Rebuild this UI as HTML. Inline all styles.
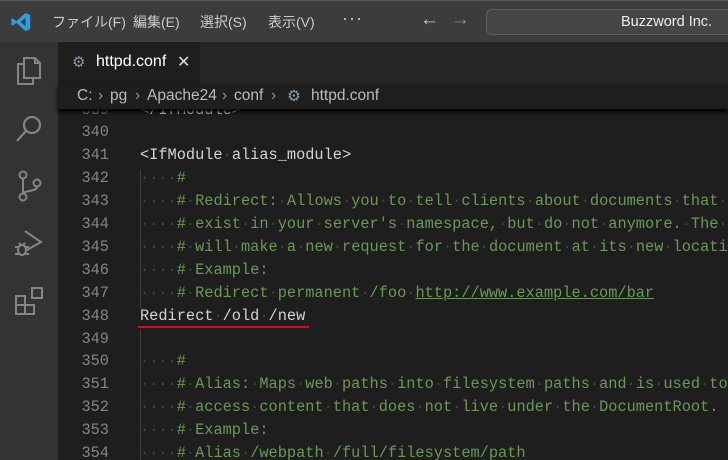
<!DOCTYPE html>
<html><head><meta charset="utf-8"><style>
*{margin:0;padding:0;box-sizing:border-box}
body{width:728px;height:460px;overflow:hidden;background:#1e1e1e;position:relative;font-family:"Liberation Sans","Noto Sans CJK JP",sans-serif}
#title{position:absolute;left:0;top:0;width:728px;height:42px;background:#3c3c3c;border-top:1px solid #555}
.menu{position:absolute;top:11px;font-size:14px;color:#ccc;white-space:nowrap}
#search{position:absolute;left:486px;top:8px;width:260px;height:26px;background:#454545;border:1px solid #5e5e5e;border-radius:6px}
#act{position:absolute;left:0;top:42px;width:58px;height:418px;background:#333}
#tabs{position:absolute;left:58px;top:42px;width:670px;height:42px;background:#252526}
#tab{position:absolute;left:0;top:0;width:142px;height:42px;background:#1e1e1e}
#crumb{position:absolute;left:58px;top:84px;width:670px;height:25px;background:#1e1e1e;box-shadow:0 3px 4px #000;z-index:3;font-size:15.5px;color:#bbb}
#crumb span{position:absolute;top:3px;white-space:nowrap}
#crumb .s{color:#999}
#ed{position:absolute;left:58px;top:84px;width:670px;height:376px;overflow:hidden}
.ln{position:absolute;left:0;width:51px;text-align:right;font:15.3px/22.9px "Liberation Mono",monospace;color:#858585}
.cd{position:absolute;left:82px;font:15.3px/22.9px "Liberation Mono",monospace;color:#d4d4d4;white-space:pre}
.c{color:#6a9955}.d{color:#454545}
.g{position:absolute;left:82px;width:1px;background:#404040}
</style></head><body>
<div id="title">
<svg style="position:absolute;left:10px;top:10px" width="22" height="22" viewBox="0 0 24 24"><path d="M17 2l5 2.5v15L17 22 7 13l-4 3-1.5-1V9L3 8l4 3 10-9zm0 5.5L11.5 12 17 16.5z" fill="#2d9fe0"/></svg>
<span class="menu" style="left:52px">ファイル(F)</span>
<span class="menu" style="left:133px">編集(E)</span>
<span class="menu" style="left:200px">選択(S)</span>
<span class="menu" style="left:268px">表示(V)</span>
<span class="menu" style="left:342px;top:7px;font-size:18px;letter-spacing:1px">···</span>
<span class="menu" style="left:420px;top:8px;font-size:19px;color:#ccc">←</span>
<span class="menu" style="left:451px;top:8px;font-size:19px;color:#888">→</span>
<div id="search"><span style="position:absolute;left:134px;top:4px;font-size:14.5px;color:#eee">Buzzword Inc.</span></div>
</div>
<div id="act">
<svg style="position:absolute;left:14px;top:13px" width="30" height="32" viewBox="0 0 30 32" fill="none" stroke="#858585" stroke-width="2"><path d="M10 3h11l5 5v15H10z M21 3v5h5"/><path d="M10 9H4v20h15v-6"/></svg>
<svg style="position:absolute;left:14px;top:72px" width="30" height="30" viewBox="0 0 30 30" fill="none" stroke="#858585" stroke-width="2.2"><circle cx="18" cy="11" r="8"/><path d="M12 17L3 27"/></svg>
<svg style="position:absolute;left:15px;top:128px" width="28" height="32" viewBox="0 0 28 32" fill="none" stroke="#858585" stroke-width="2"><circle cx="8" cy="5" r="3.5"/><circle cx="8" cy="27" r="3.5"/><circle cx="22" cy="13" r="3.5"/><path d="M8 9v14M22 17c0 5-14 3-14 7"/></svg>
<svg style="position:absolute;left:13px;top:185px" width="32" height="32" viewBox="0 0 32 32" fill="none" stroke="#858585" stroke-width="2"><path d="M12 4l16 11-14 8"/><ellipse cx="9" cy="23" rx="4" ry="5"/><path d="M2 20h4M2 27h4M12 20h4M12 27h4M6 16l2 2M12 16l-2 2"/></svg>
<svg style="position:absolute;left:14px;top:244px" width="32" height="32" viewBox="0 0 32 32" fill="none" stroke="#858585" stroke-width="2"><path d="M2 10h9v9H2zM2 19h9v9H2zM11 19h9v9h-9z"/><rect x="18" y="2" width="10" height="10"/></svg>
</div>
<div id="tabs"><div id="tab">
<span style="position:absolute;left:14px;top:11px;font-size:15px;color:#8a9aa8">⚙</span>
<span style="position:absolute;left:38px;top:11px;font-size:16px;color:#fff">httpd.conf</span>
<span style="position:absolute;left:119px;top:10px;font-size:16px;color:#ddd">✕</span>
</div></div>
<div id="crumb">
<span style="left:19px">C:</span><span class="s" style="left:40px">›</span>
<span style="left:52px">pg</span><span class="s" style="left:77px">›</span>
<span style="left:89px">Apache24</span><span class="s" style="left:164px">›</span>
<span style="left:176px">conf</span><span class="s" style="left:213px">›</span>
<span style="left:229px;color:#8a9aa8">⚙</span>
<span style="left:253px">httpd.conf</span>
</div>
<div id="ed">
<div class="g" style="top:86px;height:138px"></div>
<div class="g" style="top:246px;height:140px"></div>
<div style="position:absolute;left:80px;top:242px;width:171px;height:2px;background:#d01010"></div>
<div class="ln" style="top:14.5px">339</div><div class="cd" style="top:14.5px">&lt;/IfModule&gt;</div>
<div class="ln" style="top:37.4px">340</div>
<div class="ln" style="top:60.3px">341</div><div class="cd" style="top:60.3px">&lt;IfModule<span class="d">·</span>alias_module&gt;</div>
<div class="ln" style="top:83.2px">342</div><div class="cd" style="top:83.2px"><span class="d">····</span><span class="c">#</span></div>
<div class="ln" style="top:106.1px">343</div><div class="cd c" style="top:106.1px"><span class="d">····</span>#<span class="d">·</span>Redirect:<span class="d">·</span>Allows<span class="d">·</span>you<span class="d">·</span>to<span class="d">·</span>tell<span class="d">·</span>clients<span class="d">·</span>about<span class="d">·</span>documents<span class="d">·</span>that<span class="d">·</span>used</div>
<div class="ln" style="top:129px">344</div><div class="cd c" style="top:129px"><span class="d">····</span>#<span class="d">·</span>exist<span class="d">·</span>in<span class="d">·</span>your<span class="d">·</span>server's<span class="d">·</span>namespace,<span class="d">·</span>but<span class="d">·</span>do<span class="d">·</span>not<span class="d">·</span>anymore.<span class="d">·</span>The<span class="d">·</span>client</div>
<div class="ln" style="top:151.9px">345</div><div class="cd c" style="top:151.9px"><span class="d">····</span>#<span class="d">·</span>will<span class="d">·</span>make<span class="d">·</span>a<span class="d">·</span>new<span class="d">·</span>request<span class="d">·</span>for<span class="d">·</span>the<span class="d">·</span>document<span class="d">·</span>at<span class="d">·</span>its<span class="d">·</span>new<span class="d">·</span>location.</div>
<div class="ln" style="top:174.8px">346</div><div class="cd c" style="top:174.8px"><span class="d">····</span>#<span class="d">·</span>Example:</div>
<div class="ln" style="top:197.7px">347</div><div class="cd c" style="top:197.7px"><span class="d">····</span>#<span class="d">·</span>Redirect<span class="d">·</span>permanent<span class="d">·</span>/foo<span class="d">·</span><span style="text-decoration:underline">http://www.example.com/bar</span></div>
<div class="ln" style="top:220.6px">348</div><div class="cd" style="top:220.6px">Redirect<span class="d">·</span>/old<span class="d">·</span>/new</div>
<div class="ln" style="top:243.5px">349</div>
<div class="ln" style="top:266.4px">350</div><div class="cd" style="top:266.4px"><span class="d">····</span><span class="c">#</span></div>
<div class="ln" style="top:289.3px">351</div><div class="cd c" style="top:289.3px"><span class="d">····</span>#<span class="d">·</span>Alias:<span class="d">·</span>Maps<span class="d">·</span>web<span class="d">·</span>paths<span class="d">·</span>into<span class="d">·</span>filesystem<span class="d">·</span>paths<span class="d">·</span>and<span class="d">·</span>is<span class="d">·</span>used<span class="d">·</span>to</div>
<div class="ln" style="top:312.2px">352</div><div class="cd c" style="top:312.2px"><span class="d">····</span>#<span class="d">·</span>access<span class="d">·</span>content<span class="d">·</span>that<span class="d">·</span>does<span class="d">·</span>not<span class="d">·</span>live<span class="d">·</span>under<span class="d">·</span>the<span class="d">·</span>DocumentRoot.</div>
<div class="ln" style="top:335.1px">353</div><div class="cd c" style="top:335.1px"><span class="d">····</span>#<span class="d">·</span>Example:</div>
<div class="ln" style="top:358px">354</div><div class="cd c" style="top:358px"><span class="d">····</span>#<span class="d">·</span>Alias<span class="d">·</span>/webpath<span class="d">·</span>/full/filesystem/path</div>
</div>
</body></html>
